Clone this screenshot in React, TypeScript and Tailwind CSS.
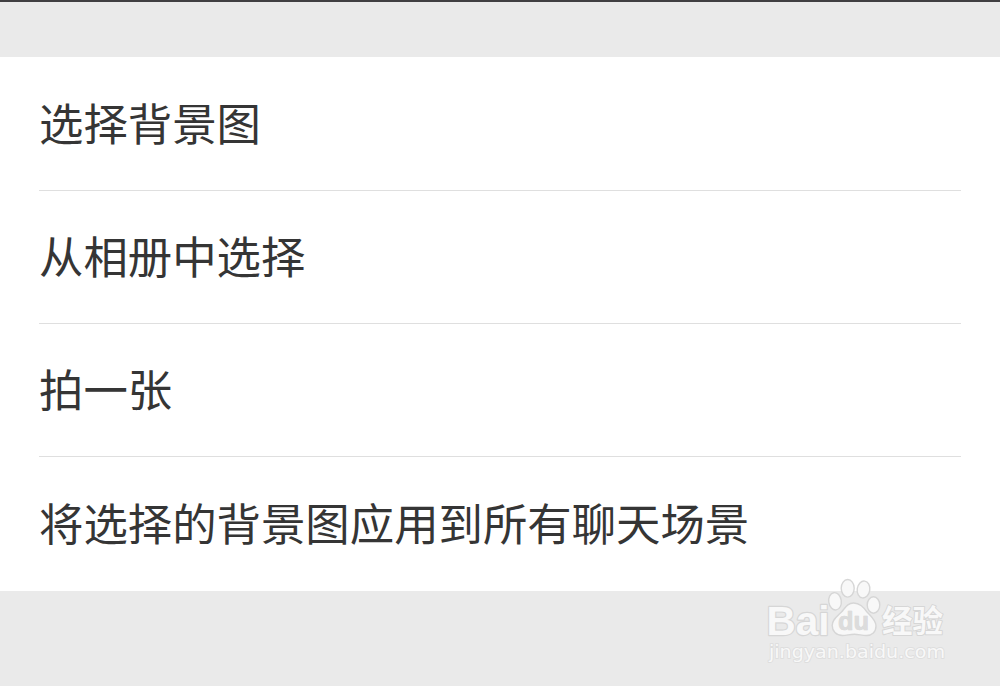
const Watermark = () => {
  return (
    <svg
      className="absolute top-[568px] left-[750px] h-[110px] w-[210px]"
      viewBox="0 0 210 110"
      fill="#f8f8f8"
      stroke="#d6d6d6"
      strokeWidth="1.4"
      strokeLinejoin="round"
    >
      <ellipse cx="85" cy="31.3" rx="6.3" ry="8.7" transform="rotate(-8 85 31.3)" />
      <ellipse cx="97.7" cy="18.3" rx="6.5" ry="8.8" />
      <ellipse cx="113.5" cy="19.5" rx="6.3" ry="8.5" transform="rotate(8 113.5 19.5)" />
      <ellipse cx="123.5" cy="35" rx="6.3" ry="8.2" />
      <path d="M103.500 33C110 33 113.500 37.500 117 42C120.500 46 126 50 126 56C126 62 122 65.500 116.500 65.500C112 65.500 108.500 64.300 104.500 64.300C99.500 64.300 97 65.500 92.500 65.500C86 65.500 82.200 61 82.200 55.500C82.200 49.500 87 46.500 91.500 42C95.500 37.500 97.500 33 103.500 33Z" />
      <g className="font-['Liberation_Sans',sans-serif] font-bold" paintOrder="stroke">
        <text x="16.5" y="64.500" fontSize="41" textLength="63" lengthAdjust="spacingAndGlyphs" strokeWidth="2.4">
          Bai
        </text>
        <text x="88" y="60" fontSize="25" textLength="31" lengthAdjust="spacingAndGlyphs" fill="#dcdcdc" stroke="#d2d2d2" strokeWidth="0.6">
          du
        </text>
      </g>
      <text
        className="font-['Noto_Sans_CJK_SC',sans-serif] font-bold"
        x="132"
        y="61.5"
        fontSize="31"
        textLength="61"
        lengthAdjust="spacingAndGlyphs"
        strokeWidth="2"
        paintOrder="stroke"
      >
        经验
      </text>
      <text
        className="font-['DejaVu_Sans',sans-serif]"
        x="19"
        y="88"
        fontSize="18.500"
        textLength="176"
        lengthAdjust="spacingAndGlyphs"
        strokeWidth="1.8"
        stroke="#dedede"
        paintOrder="stroke"
      >
        jingyan.baidu.com
      </text>
    </svg>
  )
}

const App = () => {
  const options = [
    '选择背景图',
    '从相册中选择',
    '拍一张',
    '将选择的背景图应用到所有聊天场景',
  ]
  return (
    <div className="relative h-[686px] w-[1000px] overflow-hidden border-t-2 border-[#413f42] bg-[#eaeaea] pt-[55.3px] font-['Noto_Sans_CJK_SC',sans-serif]">
      <ul className="bg-white px-[39px]">
        {options.map((option, index) => {
          return (
            <li
              key={index}
              className="flex h-[133.4px] items-center border-b border-[#dfdfdf] pb-[3.4px] text-[44.4px] leading-none whitespace-nowrap text-[#353535] last:border-b-0 last:pb-[4.4px]"
            >
              {option}
            </li>
          )
        })}
      </ul>
      <Watermark />
    </div>
  )
}

export default App
